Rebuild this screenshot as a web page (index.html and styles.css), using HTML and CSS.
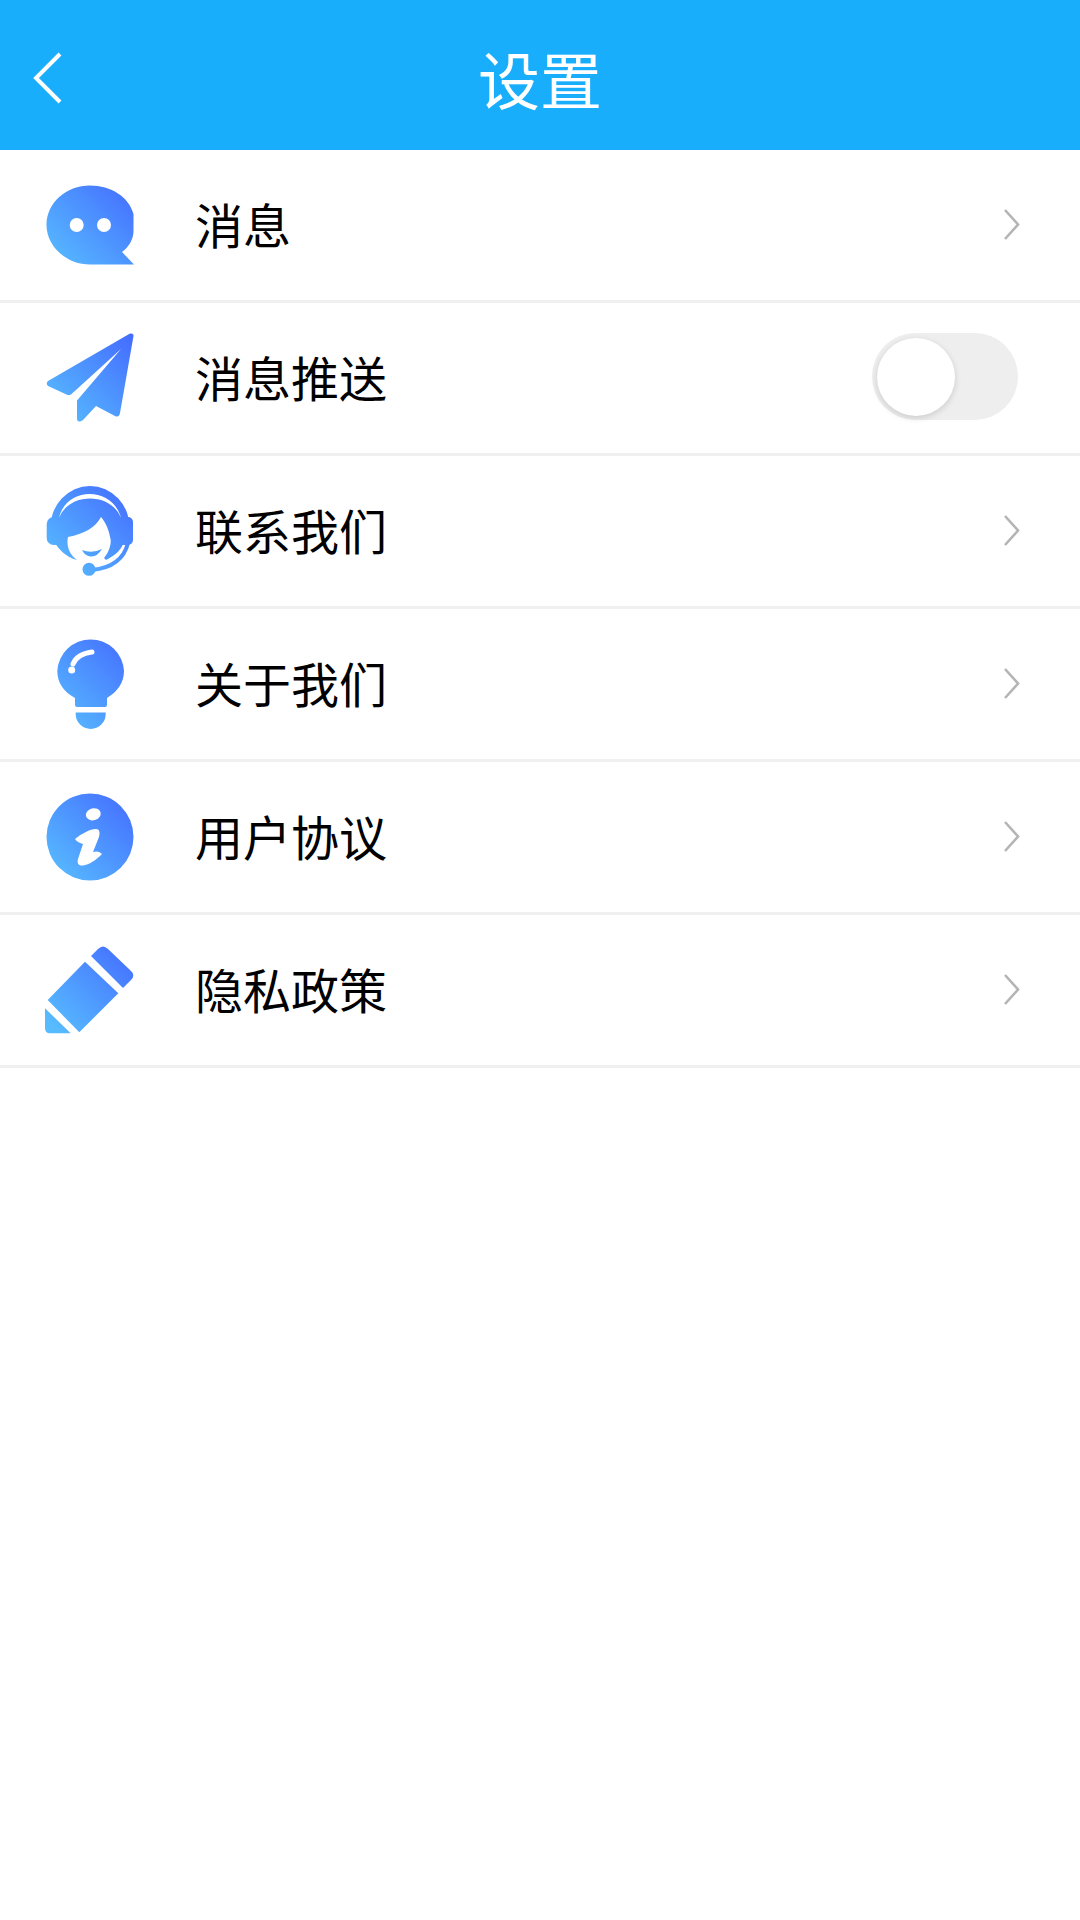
FILE: index.html
```html
<!DOCTYPE html>
<html lang="zh-CN">
<head>
    <meta charset="UTF-8">
    <meta name="viewport" content="width=device-width, initial-scale=1.0">
    <title>设置</title>
    <link rel="stylesheet" href="styles.css">
</head>
<body>
    <header class="top-bar">
        <svg class="back-icon" viewBox="0 0 30 52" fill="none" stroke="#fff" stroke-width="4">
            <path d="M28 2 4 26l24 24"/>
        </svg>
        <h1 class="top-title">设置</h1>
    </header>

    <ul class="setting-list">
        <li class="setting-row">
            <svg class="row-icon" viewBox="0 0 88 88">
                <defs>
                    <linearGradient id="icon-blue" gradientUnits="userSpaceOnUse" x1="8" y1="84" x2="84" y2="8">
                        <stop offset="0" stop-color="#57bcff"/>
                        <stop offset="1" stop-color="#4570ff"/>
                    </linearGradient>
                </defs>
                <path fill="url(#icon-blue)" d="M44 4.500C65 4.500 83 16 87.500 33V50C87.500 58 83 66 76 71L88 83.500H44C20 83.500 .5 65 .5 44 .5 22 20 4.500 44 4.500Z"/>
                <circle cx="30.700" cy="44" r="7" fill="#fff"/>
                <circle cx="58" cy="44" r="7" fill="#fff"/>
            </svg>
            <span class="row-label">消息</span>
            <svg class="chevron" viewBox="0 0 16 31" fill="none" stroke="#b4b4b4" stroke-width="2.6"><path d="M1 1l13 14.500L1 30"/></svg>
        </li>
        <li class="setting-row">
            <svg class="row-icon" viewBox="0 0 88 88">
                <path fill="url(#icon-blue)" d="M2 47 84-.5Q88-1 87.500 2L74 79Q73 84 69 82L50 72 37 86Q31 90 31 84V66.500L75 15 25 60.500Q22.500 61.500 20.500 60.500L2 52Q-.5 49.500 2 47Z"/>
            </svg>
            <span class="row-label">消息推送</span>
            <div class="switch"><div class="switch-knob"></div></div>
        </li>
        <li class="setting-row">
            <svg class="row-icon" viewBox="0 0 88 88">
                <path fill="url(#icon-blue)" d="M4 42A40 43 0 0 1 84 42L78 54C76 62 70 68 60 73L58 71C63 65 65 58 64.700 53 63 43 60 36 55 30 50 40 38 47 22 50 20 60 24 68 31 73 20 70 12 62 8 54Z"/>
                <rect x=".7" y="30" width="15" height="28" rx="7" fill="url(#icon-blue)"/>
                <rect x="72" y="30" width="15" height="28" rx="5" fill="url(#icon-blue)"/>
                <path fill="#fff" d="M13 31C20-1 67-1 75 31 65 5 23 5 13 31Z"/>
                <path fill="url(#icon-blue)" d="M36 63Q46 67 56 62 51 70 45 69.500 39 69 36 63Z"/>
                <path d="M82 56C78 72 66 81 46 83" fill="none" stroke="url(#icon-blue)" stroke-width="4"/>
                <circle cx="43" cy="82.300" r="6.500" fill="url(#icon-blue)"/>
            </svg>
            <span class="row-label">联系我们</span>
            <svg class="chevron" viewBox="0 0 16 31" fill="none" stroke="#b4b4b4" stroke-width="2.6"><path d="M1 1l13 14.500L1 30"/></svg>
        </li>
        <li class="setting-row">
            <svg class="row-icon" viewBox="0 0 88 88">
                <path fill="url(#icon-blue)" d="M29 58C18 52 11.300 43 11.300 31A33.400 33.400 0 0 1 78 31C78 43 71 52 61 58V65a2 2 0 0 1-2 2H31a2 2 0 0 1-2-2Z"/>
                <path fill="url(#icon-blue)" d="M29.700 72.500H59.700V74a15 15 0 0 1-30 0Z"/>
                <path d="M27 24Q31 14 46 12" fill="none" stroke="#fff" stroke-width="5" stroke-linecap="round"/>
                <circle cx="25.700" cy="30" r="3.500" fill="#fff"/>
            </svg>
            <span class="row-label">关于我们</span>
            <svg class="chevron" viewBox="0 0 16 31" fill="none" stroke="#b4b4b4" stroke-width="2.6"><path d="M1 1l13 14.500L1 30"/></svg>
        </li>
        <li class="setting-row">
            <svg class="row-icon" viewBox="0 0 88 88">
                <circle cx="44" cy="44" r="43.500" fill="url(#icon-blue)"/>
                <ellipse cx="47.300" cy="21.300" rx="7.500" ry="6" fill="#fff" transform="rotate(-15 47.300 21.300)"/>
                <path fill="#fff" d="M29 46C35 41 44 36 50 36 54 36 54 40 53 44L47 59C50 58 53 58 56 61 50 67 43 72 37 72.500 32 73 31 70 32 66L37 51C34 50 31 49 29 46Z"/>
            </svg>
            <span class="row-label">用户协议</span>
            <svg class="chevron" viewBox="0 0 16 31" fill="none" stroke="#b4b4b4" stroke-width="2.6"><path d="M1 1l13 14.500L1 30"/></svg>
        </li>
        <li class="setting-row">
            <svg class="row-icon" viewBox="0 0 88 88">
                <path fill="url(#icon-blue)" d="M45 10 52 3Q57-2 62 3L84 24Q90 29 85 34L77 42Z"/>
                <path fill="url(#icon-blue)" d="M39 15.700 72.300 47.300 33.300 86.300 1.700 54Z"/>
                <path fill="url(#icon-blue)" d="M-1 62.300 24.700 87.300H4Q-1 87.300-1 82.300Z"/>
            </svg>
            <span class="row-label">隐私政策</span>
            <svg class="chevron" viewBox="0 0 16 31" fill="none" stroke="#b4b4b4" stroke-width="2.6"><path d="M1 1l13 14.500L1 30"/></svg>
        </li>
    </ul>
</body>
</html>
```

FILE: styles.css
```css
body {
    margin: 0;
    background-color: #ffffff;
    color: #000000;
    font-family: "Noto Sans CJK SC", "Noto Sans", sans-serif;
}

.top-bar {
    display: grid;
    grid-template-columns: 1fr auto 1fr;
    align-items: center;
    height: 150px;
    background-color: #18aefc;
}

.back-icon {
    width: 30px;
    height: 52px;
    margin-left: 32px;
    margin-top: 6px;
}

.top-title {
    grid-column: 2;
    margin: 5px 0 0;
    color: #ffffff;
    font-size: 62px;
    font-weight: 400;
    line-height: 1;
}

.setting-list {
    margin: 0;
    padding: 0;
    list-style: none;
}

.setting-row {
    display: flex;
    align-items: center;
    box-sizing: border-box;
    height: 153px;
    padding: 0 60px 0 46px;
    border-bottom: 3px solid #f0f0f0;
}

.row-icon {
    flex-shrink: 0;
    width: 88px;
    height: 88px;
    overflow: visible;
}

.row-label {
    margin-left: 61px;
    margin-bottom: 5px;
    font-size: 48px;
    line-height: 1;
}

.chevron {
    width: 16px;
    height: 31px;
    margin-left: auto;
    margin-bottom: 2px;
}

.switch {
    display: flex;
    align-items: center;
    box-sizing: border-box;
    width: 146px;
    height: 87px;
    margin-left: auto;
    margin-right: 2px;
    margin-bottom: 3px;
    padding-left: 5px;
    border-radius: 44px;
    background-color: #eeeeee;
}

.switch-knob {
    width: 78px;
    height: 78px;
    border-radius: 50%;
    background-color: #ffffff;
    box-shadow: 0 2px 6px rgba(0, 0, 0, 0.15);
}
```
